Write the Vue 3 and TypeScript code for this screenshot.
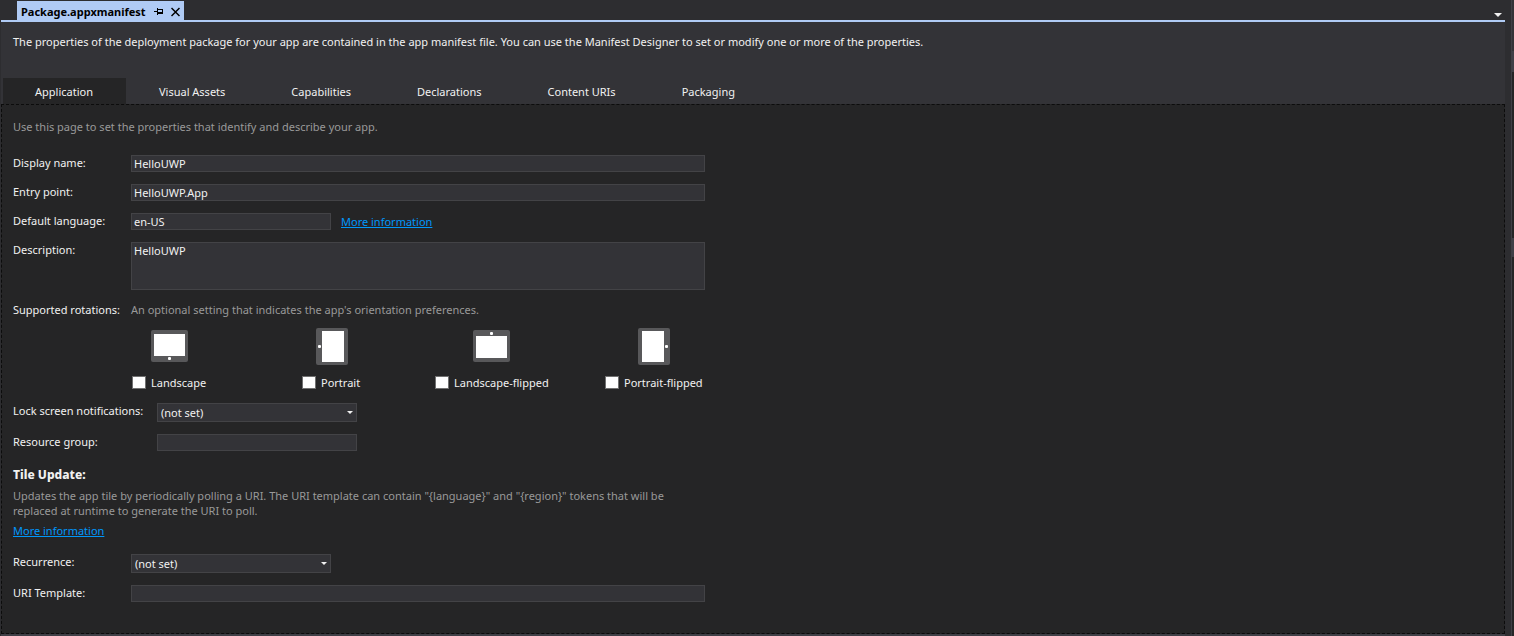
<script setup lang="ts">
import { ref } from 'vue'

interface Rotation {
  id: string
  label: string
  body: [number, number, number, number]
  screen: [number, number, number, number]
  dot: [number, number]
}

const tabs = ['Application', 'Visual Assets', 'Capabilities', 'Declarations', 'Content URIs', 'Packaging']
const activeTab = ref('Application')

const rotations: Rotation[] = [
  { id: 'landscape', label: 'Landscape', body: [0, 2, 37, 32], screen: [3, 6, 31, 22], dot: [17, 29] },
  { id: 'portrait', label: 'Portrait', body: [3, 0, 32, 37], screen: [9, 3, 22, 31], dot: [5, 17] },
  { id: 'landscape-flipped', label: 'Landscape-flipped', body: [0, 2, 37, 32], screen: [3, 8, 31, 22], dot: [17, 4] },
  { id: 'portrait-flipped', label: 'Portrait-flipped', body: [3, 0, 32, 37], screen: [7, 3, 22, 31], dot: [30, 17] },
]
const selected = ref<string[]>([])

const displayName = ref('HelloUWP')
const entryPoint = ref('HelloUWP.App')
const language = ref('en-US')
const description = ref('HelloUWP')
const lockScreen = ref('(not set)')
const resourceGroup = ref('')
const recurrence = ref('(not set)')
const uriTemplate = ref('')
</script>

<template>
  <div class="window">
    <main class="editor">
      <header class="doc-bar">
        <div class="doc-tab">
          <span class="doc-name">Package.appxmanifest</span>
          <button class="icon-btn" type="button" aria-label="Pin tab">
            <svg width="9" height="9" viewBox="0 0 9 9" shape-rendering="crispEdges">
              <path d="M0 4h3v1H0zM3 1h1v7H3zM4 2h4v1H4zM4 5h4v2H4zM8 2h1v5H8z" fill="#000" />
            </svg>
          </button>
          <button class="icon-btn" type="button" aria-label="Close tab">
            <svg width="9" height="10" viewBox="0 0 9 10">
              <path d="M0.500 1l8 8M8.500 1l-8 8" stroke="#000" stroke-width="1.5" fill="none" />
            </svg>
          </button>
        </div>
        <button class="icon-btn" type="button" aria-label="Open documents">
          <svg width="8" height="4" viewBox="0 0 8 4"><path d="M0 0h8L4 4z" fill="#f1f1f1" /></svg>
        </button>
      </header>

      <section class="intro">
        <p class="intro-text">
          The properties of the deployment package for your app are contained in the app manifest file. You can use the
          Manifest Designer to set or modify one or more of the properties.
        </p>
        <nav class="tabs" role="tablist">
          <button
            v-for="tab in tabs"
            :key="tab"
            type="button"
            role="tab"
            class="tab"
            :class="{ active: tab === activeTab }"
            :aria-selected="tab === activeTab"
            @click="activeTab = tab"
          >
            {{ tab }}
          </button>
        </nav>
      </section>

      <form class="page" @submit.prevent>
        <p class="muted lead">Use this page to set the properties that identify and describe your app.</p>

        <div class="row">
          <label for="display-name">Display name:</label>
          <input id="display-name" v-model="displayName" class="field" type="text" />
        </div>
        <div class="row">
          <label for="entry-point">Entry point:</label>
          <input id="entry-point" v-model="entryPoint" class="field" type="text" />
        </div>
        <div class="row">
          <label for="language">Default language:</label>
          <div class="with-link">
            <input id="language" v-model="language" class="field short" type="text" />
            <a href="#language">More information</a>
          </div>
        </div>
        <div class="row">
          <label for="description">Description:</label>
          <textarea id="description" v-model="description" class="field area"></textarea>
        </div>

        <fieldset class="row rotations">
          <span id="rotations-label" class="caption">Supported rotations:</span>
          <p class="muted">An optional setting that indicates the app's orientation preferences.</p>
          <div class="choices" role="group" aria-labelledby="rotations-label">
            <label v-for="r in rotations" :key="r.id" class="choice">
              <svg class="device" width="37" height="37" viewBox="0 0 37 37" shape-rendering="crispEdges">
                <rect
                  :x="r.body[0]"
                  :y="r.body[1]"
                  :width="r.body[2]"
                  :height="r.body[3]"
                  rx="2"
                  fill="#58585a"
                  shape-rendering="auto"
                />
                <rect :x="r.screen[0]" :y="r.screen[1]" :width="r.screen[2]" :height="r.screen[3]" fill="#fff" />
                <rect :x="r.dot[0]" :y="r.dot[1]" width="3" height="3" rx="1" fill="#fff" shape-rendering="auto" />
              </svg>
              <span class="check">
                <input v-model="selected" type="checkbox" :value="r.id" />
                <span>{{ r.label }}</span>
              </span>
            </label>
          </div>
        </fieldset>

        <div class="row wide-label">
          <label for="lock-screen">Lock screen notifications:</label>
          <span class="select">
            <select id="lock-screen" v-model="lockScreen">
              <option>(not set)</option>
              <option>Badge</option>
              <option>Badge and Tile Text</option>
            </select>
            <svg width="6" height="3" viewBox="0 0 6 3"><path d="M0 0h6L3 3z" fill="#f1f1f1" /></svg>
          </span>
        </div>
        <div class="row wide-label">
          <label for="resource-group">Resource group:</label>
          <input id="resource-group" v-model="resourceGroup" class="field short" type="text" />
        </div>

        <h2 class="heading">Tile Update:</h2>
        <p class="muted tile-text">
          Updates the app tile by periodically polling a URI. The URI template can contain "{language}" and "{region}"
          tokens that will be replaced at runtime to generate the URI to poll.
        </p>
        <a class="tile-link" href="#tile">More information</a>

        <div class="row">
          <label for="recurrence">Recurrence:</label>
          <span class="select">
            <select id="recurrence" v-model="recurrence">
              <option>(not set)</option>
              <option>Daily</option>
              <option>Hourly</option>
            </select>
            <svg width="6" height="3" viewBox="0 0 6 3"><path d="M0 0h6L3 3z" fill="#f1f1f1" /></svg>
          </span>
        </div>
        <div class="row">
          <label for="uri-template">URI Template:</label>
          <input id="uri-template" v-model="uriTemplate" class="field" type="text" />
        </div>
      </form>
    </main>

    <aside class="side-edge">
      <div class="side-top"></div>
      <div class="side-tool"></div>
      <div class="side-body"></div>
      <div class="side-title"></div>
      <div class="side-rest"></div>
    </aside>
  </div>
</template>

<style>
body {
  margin: 0;
  background: #2d2d30;
}
</style>

<style scoped>
.window {
  display: flex;
  min-height: 100vh;
  box-sizing: border-box;
  padding-left: 1px;
  background: #2d2d30;
  color: #f1f1f1;
  font-family: 'Noto Sans', 'Open Sans', sans-serif;
  font-size: 11px;
  line-height: 15px;
}

button,
input,
select,
textarea {
  font: inherit;
  color: inherit;
  margin: 0;
}

p {
  margin: 0;
}

.editor {
  flex: 1;
  min-width: 0;
  display: flex;
  flex-direction: column;
  border-bottom: 2px solid #3f3f46;
}

.doc-bar {
  display: flex;
  align-items: flex-end;
  justify-content: space-between;
  height: 20px;
  padding: 0 3px 0 16px;
  border-bottom: 2px solid #b0cbf5;
}

.doc-tab {
  display: flex;
  align-items: center;
  gap: 8px;
  height: 19px;
  padding: 0 4px;
  background: #b0cbf5;
  color: #000;
}

.doc-name {
  font-weight: 700;
  padding-top: 2px;
}

.icon-btn {
  display: flex;
  padding: 3px 0;
  border: 0;
  background: none;
}

.doc-tab .icon-btn {
  padding: 4px 0 2px;
}

.intro {
  background: #333337;
}

.intro-text {
  padding: 12px 12px 29px;
}

.tabs {
  display: flex;
  gap: 1px;
  padding-left: 2px;
}

.tab {
  height: 26px;
  padding: 0 33px 0 32px;
  border: 0;
  background: none;
}

.tab.active {
  background: #252526;
}

.page {
  flex: 1;
  box-sizing: border-box;
  padding: 14px 11px;
  border: 1px dashed #0c0c0c;
  background: #252526;
}

.muted {
  color: #999;
}

.lead {
  margin-bottom: 21px;
}

.row {
  display: grid;
  grid-template-columns: 118px minmax(0, 574px);
  align-items: start;
  margin-bottom: 12px;
}

.wide-label {
  grid-template-columns: 144px minmax(0, 548px);
}

.field {
  box-sizing: border-box;
  width: 100%;
  height: 17px;
  padding: 0 2px;
  border: 1px solid #434346;
  border-radius: 0;
  background: #333337;
  line-height: 15px;
}

.short {
  width: 200px;
}

.area {
  display: block;
  height: 48px;
  resize: none;
}

.with-link {
  display: flex;
  align-items: center;
  gap: 10px;
}

a {
  color: #0097fb;
  text-decoration: underline;
}

.rotations {
  margin: 0 0 12px;
  padding: 0;
  border: 0;
  min-width: 0;
}

.choices {
  grid-column: 2;
  display: grid;
  grid-template-columns: 170px 133px 170px auto;
  justify-content: start;
  justify-items: start;
  padding: 11px 0 1px 1px;
}

.choice {
  display: flex;
  flex-direction: column;
  align-items: center;
  gap: 10px;
}

.device {
  display: block;
}

.check {
  display: flex;
  align-items: center;
  gap: 5px;
  white-space: nowrap;
}

.check input {
  appearance: none;
  box-sizing: border-box;
  width: 14px;
  height: 13px;
  border: 1px solid #707070;
  background: #fefefe;
}

.check input:checked {
  background: #007acc;
}

.select {
  display: grid;
  align-items: center;
  width: 200px;
}

.select select,
.select svg {
  grid-area: 1 / 1;
}

.select select {
  appearance: none;
  box-sizing: border-box;
  width: 100%;
  height: 19px;
  padding: 0 3px;
  border: 1px solid #434346;
  border-radius: 0;
  background: #333337;
}

.select svg {
  justify-self: end;
  margin-right: 4px;
  pointer-events: none;
}

.heading {
  margin: 0 0 6px;
  padding-top: 4px;
  font-size: 12px;
  line-height: 15px;
  font-weight: 800;
}

.tile-text {
  max-width: 692px;
}

.tile-link {
  display: block;
  width: max-content;
  margin: 5px 0 16px;
}

.side-edge {
  display: flex;
  flex-direction: column;
  width: 2px;
  margin-left: 6px;
  border-left: 1px solid #3f3f46;
}

.side-top {
  height: 51px;
  background: #333337;
}

.side-tool {
  height: 21px;
  background: #3f3f46;
}

.side-body {
  height: 166px;
  background: #252526;
}

.side-title {
  height: 19px;
  background: #3f3f46;
}

.side-rest {
  flex: 1;
  background: #252526;
}
</style>
